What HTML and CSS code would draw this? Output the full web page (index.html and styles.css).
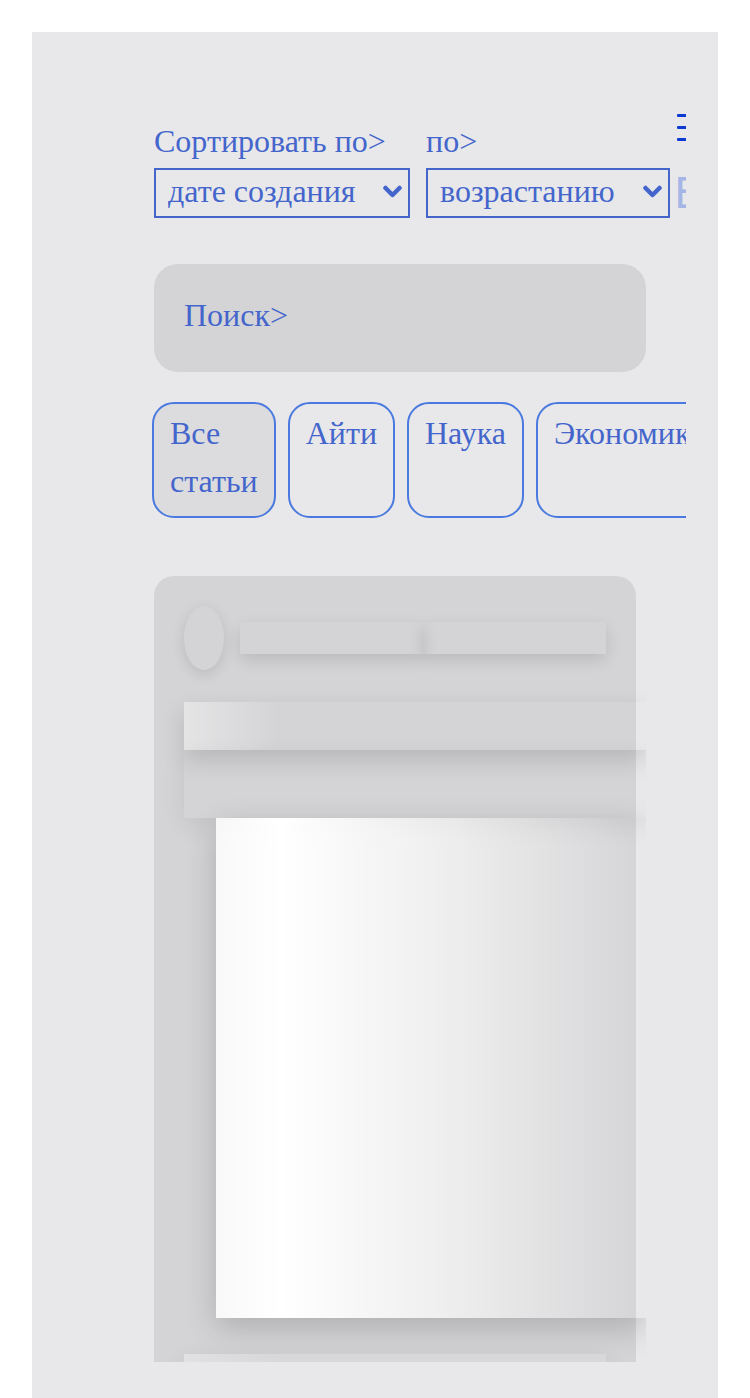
FILE: index.html
```html
<!DOCTYPE html>
<html lang="ru">
<head>
<meta charset="utf-8">
<title>Статьи</title>
<link rel="stylesheet" href="styles.css">
</head>
<body>
<div class="page">
  <div class="inner">
    <header class="sortbar">
      <div class="sort-group">
        <label class="sort-label">Сортировать по&gt;</label>
        <div class="select-wrap">
          <select class="sort-select w1"><option>дате создания</option><option>популярности</option></select>
          <svg class="chev" width="19" height="14" viewBox="0 0 19 14"><polyline points="2.5,3 9.5,10 16.5,3" fill="none" stroke="#4466cc" stroke-width="4.5" stroke-linecap="round" stroke-linejoin="round"/></svg>
        </div>
      </div>
      <div class="sort-group">
        <label class="sort-label">по&gt;</label>
        <div class="select-wrap">
          <select class="sort-select w2"><option>возрастанию</option><option>убыванию</option></select>
          <svg class="chev" width="19" height="14" viewBox="0 0 19 14"><polyline points="2.5,3 9.5,10 16.5,3" fill="none" stroke="#4466cc" stroke-width="4.5" stroke-linecap="round" stroke-linejoin="round"/></svg>
        </div>
      </div>
      <div class="tools">
        <svg class="burger" width="30" height="32" viewBox="0 0 30 32"><rect x="0" y="2" width="30" height="3" rx="1" fill="#0d3ad1"/><rect x="0" y="14" width="30" height="3" rx="1" fill="#0d3ad1"/><rect x="0" y="26" width="30" height="3" rx="1" fill="#0d3ad1"/></svg>
        <span class="tool-e">Е</span>
      </div>
    </header>

    <div class="search">Поиск&gt;</div>

    <nav class="tabs">
      <div class="tab active">Все статьи</div>
      <div class="tab">Айти</div>
      <div class="tab">Наука</div>
      <div class="tab">Экономика</div>
      <div class="tab">Политика</div>
    </nav>

    <div class="feed">
      <article class="card">
        <div class="card-head">
          <div class="avatar"></div>
          <div class="line"></div>
          <div class="line"></div>
        </div>
        <div class="title-sk"></div>
        <div class="text-sk"></div>
        <div class="image-sk"></div>
        <div class="footer-sk"></div>
      </article>
    </div>
  </div>
</div>
</body>
</html>
```

FILE: styles.css
```css
html, body {
  margin: 0;
  background: #ffffff;
}

body {
  font-family: "Liberation Serif", "Times New Roman", serif;
  color: #4466cc;
}

.page {
  margin: 32px 32px 0;
  height: 1366px;
  box-sizing: border-box;
  padding: 0 32px 0 118px;
  background: #e8e8ea;
}

.inner {
  height: 1330px;
  box-sizing: border-box;
  padding: 80px 0 0 4px;
  overflow: hidden;
}

/* sort bar */
.sortbar {
  display: flex;
  align-items: flex-start;
  gap: 16px;
}

.sort-group {
  display: flex;
  flex-direction: column;
  padding-top: 11px;
  flex: none;
}

.sort-label {
  font-size: 32px;
  line-height: 37px;
}

.select-wrap {
  position: relative;
  margin-top: 8px;
}

.sort-select {
  appearance: none;
  -webkit-appearance: none;
  display: block;
  height: 50px;
  box-sizing: border-box;
  border: 2px solid #4466cc;
  border-radius: 0;
  background: transparent;
  color: #4466cc;
  font-family: "Liberation Serif", "Times New Roman", serif;
  font-size: 32px;
  padding: 0 40px 4px 12px;
  margin: 0;
}

.w1 { width: 256px; }
.w2 { width: 244px; }

.chev {
  position: absolute;
  right: 8px;
  top: 17px;
  pointer-events: none;
}

.tools {
  flex: none;
  width: 30px;
  margin-left: -9px;
  display: flex;
  flex-direction: column;
}

.burger {
  display: block;
}

.tool-e {
  display: block;
  margin-top: 28px;
  margin-left: -3px;
  font-family: "DejaVu Sans", sans-serif;
  font-size: 42px;
  line-height: 44px;
  color: #a5b5e6;
}

/* search */
.search {
  margin-top: 46px;
  width: 492px;
  height: 108px;
  box-sizing: border-box;
  padding: 33px 30px 0;
  background: #d4d4d6;
  border-radius: 24px;
  font-size: 32px;
  line-height: 37px;
}

/* tabs */
.tabs {
  display: flex;
  gap: 12px;
  margin: 30px 0 0 -2px;
}

.tab {
  flex: none;
  width: min-content;
  border: 2px solid #4a7ae0;
  border-radius: 22px;
  padding: 5px 16px 11px;
  font-size: 32px;
  line-height: 48px;
}

.tab.active {
  background: #dcdcde;
}

/* feed skeleton */
.feed {
  margin-top: 58px;
  width: 492px;
  overflow: hidden;
}

.card {
  width: 482px;
  height: 900px;
  box-sizing: border-box;
  padding: 30px 0 0 30px;
  background: #d4d4d6;
  border-radius: 20px;
}

.card-head {
  display: flex;
  align-items: center;
}

.avatar {
  flex: none;
  width: 40px;
  height: 64px;
  margin-right: 16px;
  border-radius: 50%;
  box-shadow: 0 4px 14px rgba(0, 0, 0, 0.12);
}

.line {
  flex: none;
  width: 183px;
  height: 32px;
  box-shadow: 0 6px 16px rgba(0, 0, 0, 0.12);
}

.title-sk {
  margin-top: 32px;
  width: 462px;
  height: 48px;
  background: linear-gradient(90deg, rgba(255, 255, 255, 0.38), rgba(255, 255, 255, 0) 95px);
  box-shadow: 0 10px 24px rgba(0, 0, 0, 0.14);
}

.text-sk {
  width: 462px;
  height: 68px;
  box-shadow: 0 8px 24px rgba(0, 0, 0, 0.08);
}

.image-sk {
  margin-left: 32px;
  width: 430px;
  height: 500px;
  background: linear-gradient(90deg,
    rgba(255, 255, 255, 0.85) 0%,
    #ffffff 15%,
    rgba(255, 255, 255, 0.6) 55%,
    rgba(255, 255, 255, 0.15) 90%,
    rgba(255, 255, 255, 0) 100%);
  box-shadow: 0 10px 30px rgba(0, 0, 0, 0.18);
}

.footer-sk {
  margin-top: 36px;
  width: 422px;
  height: 40px;
  background: linear-gradient(90deg, rgba(255, 255, 255, 0.3), rgba(255, 255, 255, 0.1) 95px);
  box-shadow: 0 8px 24px rgba(0, 0, 0, 0.1);
}
```
